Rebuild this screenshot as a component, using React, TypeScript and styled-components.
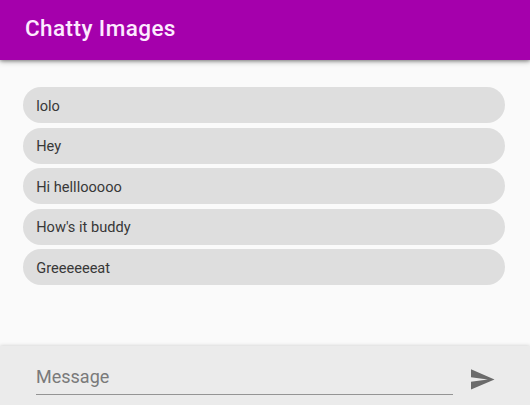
import React from 'react';
import styled, { createGlobalStyle } from 'styled-components';

const GlobalStyle = createGlobalStyle`
  *, *::before, *::after { box-sizing: border-box; }
  html, body, #root { height: 100%; }
  body {
    margin: 0;
    overflow: hidden;
    background: #fafafa;
    font-family: Roboto, sans-serif;
  }
`;

const Page = styled.div`
  display: flex;
  flex-direction: column;
  height: 405px;
  width: 530px;
  overflow: hidden;
  background: #fafafa;
`;

const AppBar = styled.header`
  display: flex;
  align-items: center;
  flex: 0 0 60px;
  padding: 0 25px 4px;
  background: #a500ac;
  box-shadow: 0 1px 6px rgba(0, 0, 0, 0.38), 0 1px 3px rgba(0, 0, 0, 0.25);
`;

const Title = styled.h1`
  margin: 0;
  color: #fdeaff;
  font-size: 22.5px;
  font-weight: 500;
  line-height: 28px;
  letter-spacing: 0.42px;
`;

const MessageList = styled.ul`
  display: flex;
  flex: 1;
  flex-direction: column;
  gap: 4.5px;
  margin: 0;
  padding: 27px 24.7px 0 22.7px;
  list-style: none;
`;

const Chip = styled.li`
  display: flex;
  align-items: center;
  flex: 0 0 36px;
  padding: 1px 13.5px 0;
  border-radius: 18px;
  background: #dedede;
  color: #383838;
  font-size: 14.6px;
  line-height: 20px;
`;

const Composer = styled.form`
  display: flex;
  flex: 0 0 59px;
  align-items: flex-start;
  gap: 17px;
  padding: 14px 34px 0 36px;
  background: #ebebeb;
  box-shadow: 0 0 4px rgba(0, 0, 0, 0.2);
`;

const MessageInput = styled.input`
  width: 417px;
  height: 35px;
  padding: 0 0 1px;
  border: 0;
  border-bottom: 1px solid #949494;
  border-radius: 0;
  outline: 0;
  background: transparent;
  color: #383838;
  font: 400 18px/24px Roboto, sans-serif;

  &::placeholder {
    color: #7a7a7a;
    opacity: 1;
  }
`;

const SendButton = styled.button`
  display: flex;
  margin: 9px 0 0;
  padding: 0;
  border: 0;
  background: transparent;
  color: #6b6b6b;
`;

const SendIcon = () => (
  <svg width="25" height="21" viewBox="0 0 25 21" fill="currentColor" aria-hidden="true">
    <path d="M1 20.5 24.5 10.5 1 .2v8l16.8 2.3L1 12.7z" />
  </svg>
);

const messages = ['lolo', 'Hey', 'Hi helllooooo', "How's it buddy", 'Greeeeeeat'];

export default function App() {
  return (
    <>
      <GlobalStyle />
      <Page>
        <AppBar>
          <Title>Chatty Images</Title>
        </AppBar>
        <MessageList>
          {messages.map((message) => (
            <Chip key={message}>{message}</Chip>
          ))}
        </MessageList>
        <Composer onSubmit={(event) => event.preventDefault()}>
          <MessageInput placeholder="Message" aria-label="Message" />
          <SendButton type="submit" aria-label="Send">
            <SendIcon />
          </SendButton>
        </Composer>
      </Page>
    </>
  );
}
